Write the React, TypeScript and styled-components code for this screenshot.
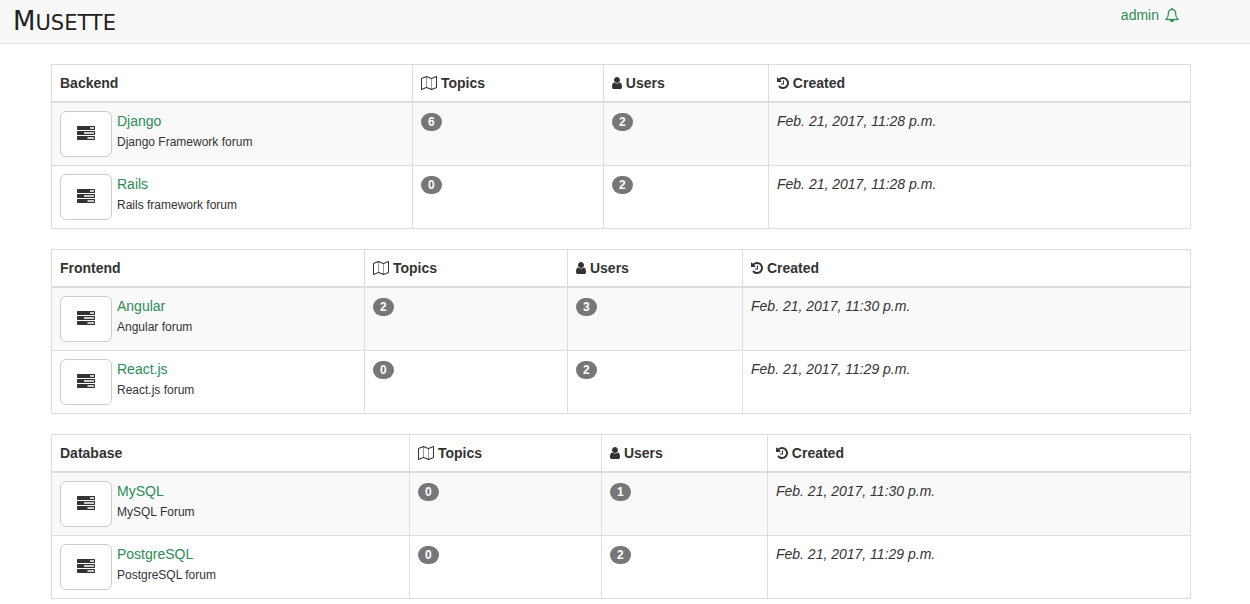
import React from "react";
import styled, { createGlobalStyle } from "styled-components";

const GlobalStyle = createGlobalStyle`
  *, *::before, *::after { box-sizing: border-box; }
  body {
    margin: 0;
    background: #fff;
    color: #333;
    font-family: "Liberation Sans", Arial, Helvetica, sans-serif;
    font-size: 14px;
    line-height: 20px;
  }
`;

const Navbar = styled.header`
  display: flex;
  justify-content: space-between;
  align-items: flex-start;
  height: 44px;
  padding: 0 71px 0 13px;
  background: #f8f8f8;
  border-bottom: 1px solid #e7e7e7;
`;

const Brand = styled.a`
  display: block;
  align-self: center;
  color: #222;
  font-family: "DejaVu Sans", sans-serif;
  font-size: 21px;
  line-height: 28px;
  text-decoration: none;
  text-transform: uppercase;

  &::first-letter { font-size: 26px; }
`;

const UserNav = styled.nav`
  display: flex;
  gap: 6px;
  padding-top: 5px;
`;

const TextLink = styled.a`
  color: #2e8b57;
  text-decoration: none;
  &:hover { text-decoration: underline; }
`;

const Main = styled.main`
  display: flex;
  flex-direction: column;
  gap: 20px;
  padding: 20px 59px 5px 51px;
`;

const Table = styled.table`
  width: 100%;
  table-layout: fixed;
  border-collapse: collapse;
  border: 1px solid #ddd;
`;

const Column = styled.col<{ $share: number }>`
  width: ${(p) => p.$share}%;
`;

const HeadCell = styled.th`
  padding: 8px;
  border: 1px solid #ddd;
  border-bottom-width: 2px;
  font-weight: bold;
  text-align: left;
`;

const Row = styled.tr`
  &:nth-child(odd) { background: #f9f9f9; }
`;

const Cell = styled.td`
  padding: 8px;
  border: 1px solid #ddd;
  vertical-align: top;
`;

const Forum = styled.div`
  display: flex;
  gap: 5px;
`;

const ForumButton = styled.button`
  display: flex;
  flex-shrink: 0;
  align-items: flex-start;
  justify-content: center;
  width: 52px;
  height: 46px;
  padding: 14px 0 0;
  color: #333;
  background: #fff;
  border: 1px solid #ccc;
  border-radius: 6px;
  cursor: pointer;
`;

const Description = styled.div`
  font-size: 12px;
  line-height: 22px;
`;

const Badge = styled.span`
  display: inline-block;
  min-width: 10px;
  padding: 3px 7px;
  border-radius: 10px;
  background: #777;
  color: #fff;
  font-size: 12px;
  font-weight: bold;
  line-height: 12px;
  text-align: center;
  vertical-align: middle;
`;

const Glyph = styled.svg`
  height: 14px;
  fill: currentColor;
  vertical-align: -2px;
`;

const BellGlyph = styled(Glyph)`
  margin-top: 3px;
`;

const icons = {
  map: {
    width: 2048,
    height: 1792,
    d: "M2020 11q28 20 28 53v1408q0 20-11 36t-29 23l-640 256q-24 11-48 0l-616-246-616 246q-10 5-24 5-19 0-36-11-28-20-28-53v-1408q0-20 11-36t29-23l640-256q24-11 48 0l616 246 616-246q32-13 60 6zm-1284 135v1270l576 230v-1270zm-608 217v1270l544-217v-1270zm1792 1066v-1270l-544 217v1270z",
  },
  user: {
    width: 1280,
    height: 1792,
    d: "M1280 1399q0 109-62.500 187t-150.500 78h-854q-88 0-150.500-78t-62.500-187q0-85 8.500-160.500t31.500-152 58.500-131 94-89 134.500-34.500q131 128 313 128t313-128q76 0 134.500 34.500t94 89 58.500 131 31.500 152 8.500 160.500zm-256-887q0 159-112.500 271.500t-271.500 112.500-271.500-112.500-112.500-271.500 112.500-271.500 271.500-112.500 271.500 112.500 112.500 271.500z",
  },
  history: {
    width: 1536,
    height: 1792,
    d: "M1536 896q0 156-61 298t-164 245-245 164-298 61q-172 0-327-72.500t-264-204.500q-7-10-6.500-22.500t8.500-20.500l137-138q10-9 25-9 16 2 23 12 73 95 179 147t225 52q104 0 198.500-40.500t163.500-109.500 109.500-163.500 40.500-198.500-40.500-198.500-109.500-163.500-163.500-109.500-198.500-40.500q-98 0-188 35.500t-160 101.500l137 138q31 30 14 69-17 40-59 40h-448q-26 0-45-19t-19-45v-448q0-42 40-59 39-17 69 14l130 129q107-101 244.500-156.500t284.500-55.500q156 0 298 61t245 164 164 245 61 298zm-640-288v448q0 14-9 23t-23 9h-320q-14 0-23-9t-9-23v-64q0-14 9-23t23-9h224v-352q0-14 9-23t23-9h64q14 0 23 9t9 23z",
  },
  tasks: {
    width: 18,
    height: 14,
    d: "M.5 0h17l.5 .5v3l-.5 .5h-17l-.5-.5v-3zM13 1.200v1.600h4v-1.600zM.5 5h17l.5 .5v3l-.5 .5h-17l-.5-.5v-3zM7 6.250v1.500h10v-1.500zM.5 10h17l.5 .5v3l-.5 .5h-17l-.5-.5v-3zM10.500 11.250v1.500h6.500v-1.500z",
  },
  bell: {
    width: 1792,
    height: 1792,
    d: "M912 1696q0-16-16-16-59 0-101.500-42.500t-42.500-101.500q0-16-16-16t-16 16q0 73 51.500 124.500t124.500 51.500q16 0 16-16zm-666-288h1300q-266-300-266-832 0-51-24-105t-69-103-121.500-80.500-169.500-31.500-169.500 31.500-121.500 80.500-69 103-24 105q0 532-266 832zm1482 0q0 52-38 90t-90 38h-448q0 106-75 181t-181 75-181-75-75-181h-448q-52 0-90-38t-38-90q50-42 91-88t85-119.500 74.500-158.500 50-206 19.500-260q0-152 117-282.500t307-158.500q-8-19-8-39 0-40 28-68t68-28 68 28 28 68q0 20-8 39 190 28 307 158.500t117 282.500q0 139 19.500 260t50 206 74.500 158.500 85 119.500 91 88z",
  },
};

type IconName = keyof typeof icons;

function Icon({ name }: { name: IconName }) {
  const { width, height, d } = icons[name];
  const Shape = name === "bell" ? BellGlyph : Glyph;
  return (
    <Shape viewBox={`0 0 ${width} ${height}`} aria-hidden="true">
      <path
        d={d}
        fillRule={name === "tasks" ? "evenodd" : "nonzero"}
        stroke="currentColor"
        strokeWidth={name === "bell" ? 40 : 0}
      />
    </Shape>
  );
}

interface ForumData {
  name: string;
  description: string;
  topics: number;
  users: number;
  created: string;
}

interface Category {
  title: string;
  shares: number[];
  forums: ForumData[];
}

const categories: Category[] = [
  {
    title: "Backend",
    shares: [31.7, 16.76, 14.49, 37.05],
    forums: [
      { name: "Django", description: "Django Framework forum", topics: 6, users: 2, created: "Feb. 21, 2017, 11:28 p.m." },
      { name: "Rails", description: "Rails framework forum", topics: 0, users: 2, created: "Feb. 21, 2017, 11:28 p.m." },
    ],
  },
  {
    title: "Frontend",
    shares: [27.49, 17.82, 15.36, 39.33],
    forums: [
      { name: "Angular", description: "Angular forum", topics: 2, users: 3, created: "Feb. 21, 2017, 11:30 p.m." },
      { name: "React.js", description: "React.js forum", topics: 0, users: 2, created: "Feb. 21, 2017, 11:29 p.m." },
    ],
  },
  {
    title: "Database",
    shares: [31.44, 16.85, 14.57, 37.14],
    forums: [
      { name: "MySQL", description: "MySQL Forum", topics: 0, users: 1, created: "Feb. 21, 2017, 11:30 p.m." },
      { name: "PostgreSQL", description: "PostgreSQL forum", topics: 0, users: 2, created: "Feb. 21, 2017, 11:29 p.m." },
    ],
  },
];

function CategoryTable({ title, shares, forums }: Category) {
  return (
    <Table>
      <colgroup>
        {shares.map((share, i) => (
          <Column key={i} $share={share} />
        ))}
      </colgroup>
      <thead>
        <tr>
          <HeadCell scope="col">{title}</HeadCell>
          <HeadCell scope="col"><Icon name="map" /> Topics</HeadCell>
          <HeadCell scope="col"><Icon name="user" /> Users</HeadCell>
          <HeadCell scope="col"><Icon name="history" /> Created</HeadCell>
        </tr>
      </thead>
      <tbody>
        {forums.map((forum) => (
          <Row key={forum.name}>
            <Cell>
              <Forum>
                <ForumButton type="button" aria-label={`Open ${forum.name}`}>
                  <Icon name="tasks" />
                </ForumButton>
                <div>
                  <TextLink href="#">{forum.name}</TextLink>
                  <Description>{forum.description}</Description>
                </div>
              </Forum>
            </Cell>
            <Cell><Badge>{forum.topics}</Badge></Cell>
            <Cell><Badge>{forum.users}</Badge></Cell>
            <Cell><em>{forum.created}</em></Cell>
          </Row>
        ))}
      </tbody>
    </Table>
  );
}

export default function App() {
  return (
    <>
      <GlobalStyle />
      <Navbar>
        <Brand href="#">Musette</Brand>
        <UserNav>
          <TextLink href="#">admin</TextLink>
          <TextLink href="#" aria-label="Notifications">
            <Icon name="bell" />
          </TextLink>
        </UserNav>
      </Navbar>
      <Main>
        {categories.map((category) => (
          <CategoryTable key={category.title} {...category} />
        ))}
      </Main>
    </>
  );
}
